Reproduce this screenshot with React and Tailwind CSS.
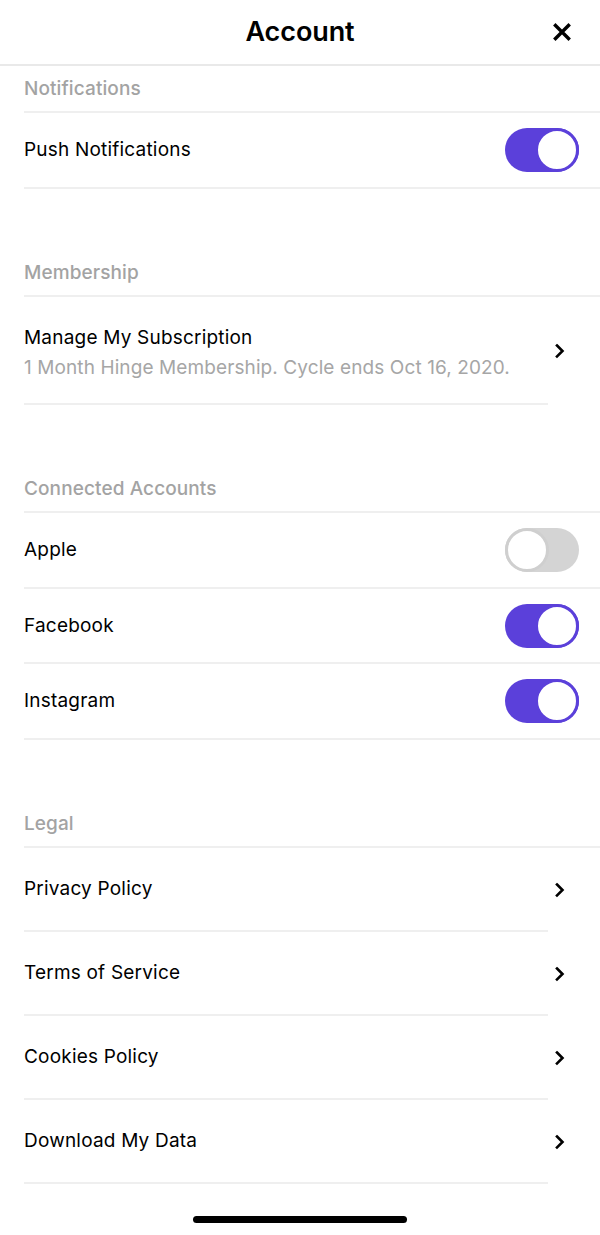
import React from "react";

const font = { fontFamily: "Inter, 'Noto Sans', sans-serif" };

function Toggle({ on }) {
  return on ? (
    <div className="relative h-[44px] w-[74px] rounded-full bg-[#5b40da]">
      <div className="absolute right-0 top-0 h-[44px] w-[44px] rounded-full border-[3px] border-[#5b40da] bg-white" />
    </div>
  ) : (
    <div className="relative h-[44px] w-[74px] rounded-full bg-[#d4d4d4]">
      <div className="absolute left-0 top-0 h-[44px] w-[44px] rounded-full border-[3px] border-[#cfcfcf] bg-white" />
    </div>
  );
}

function Chevron() {
  return (
    <svg width="12" height="16" viewBox="0 0 12 16" className="shrink-0">
      <path d="M3 2.5 L8.5 8 L3 13.5" fill="none" stroke="#000" strokeWidth="2.6" strokeLinecap="square" strokeLinejoin="miter" />
    </svg>
  );
}

function SectionHeader({ title, first }) {
  return (
    <div className={`ml-6 flex items-end border-b-2 border-[#efefef] ${first ? "h-[47px]" : "h-[108px]"}`}>
      <div className="pb-[10px] text-[19px] font-medium leading-[24px] tracking-[0.1px] text-[#a3a3a3]">{title}</div>
    </div>
  );
}

function ToggleRow({ label, on, h = "h-[76px]" }) {
  return (
    <div className={`ml-6 flex ${h} items-center justify-between border-b-2 border-[#efefef] pr-[21px]`}>
      <div className="text-[19px] leading-[24px] tracking-[0.2px] text-black">{label}</div>
      <Toggle on={on} />
    </div>
  );
}

function LinkRow({ label }) {
  return (
    <div className="flex h-[84px] items-center">
      <div className="ml-6 flex h-full w-[524px] items-center border-b-2 border-[#efefef]">
        <div className="text-[19px] leading-[24px] tracking-[0.2px] text-black">{label}</div>
      </div>
      <div className="flex flex-1 justify-start pl-[6px]">
        <Chevron />
      </div>
    </div>
  );
}

export default function App() {
  return (
    <div className="relative h-[1235px] w-[600px] overflow-hidden bg-white" style={font}>
      <div className="relative flex h-[66px] items-center justify-center border-b-2 border-[#e9e9e9]">
        <div className="pt-[1px] text-[27px] font-semibold tracking-[-0.1px] text-black">Account</div>
        <svg className="absolute right-[29px] top-[23px]" width="18" height="18" viewBox="0 0 18 18">
          <path d="M2.5 2.5 L15.5 15.5 M15.5 2.5 L2.5 15.5" stroke="#000" strokeWidth="3.4" strokeLinecap="square" />
        </svg>
      </div>

      <SectionHeader title="Notifications" first />
      <ToggleRow label="Push Notifications" on />

      <SectionHeader title="Membership" />
      <div className="flex h-[108px] items-center">
        <div className="ml-6 flex h-full w-[524px] flex-col justify-center border-b-2 border-[#efefef] pt-[6px]">
          <div className="text-[19px] leading-[30px] tracking-[0.2px] text-black">Manage My Subscription</div>
          <div className="text-[19px] leading-[30px] tracking-[0.1px] text-[#a6a6a6]">1 Month Hinge Membership. Cycle ends Oct 16, 2020.</div>
        </div>
        <div className="flex flex-1 justify-start pl-[6px]">
          <Chevron />
        </div>
      </div>

      <SectionHeader title="Connected Accounts" />
      <ToggleRow label="Apple" on={false} />
      <ToggleRow label="Facebook" on h="h-[75px]" />
      <ToggleRow label="Instagram" on />

      <SectionHeader title="Legal" />
      <LinkRow label="Privacy Policy" />
      <LinkRow label="Terms of Service" />
      <LinkRow label="Cookies Policy" />
      <LinkRow label="Download My Data" />

      <div className="absolute bottom-[12px] left-[193px] h-[7px] w-[214px] rounded-full bg-black" />
    </div>
  );
}
